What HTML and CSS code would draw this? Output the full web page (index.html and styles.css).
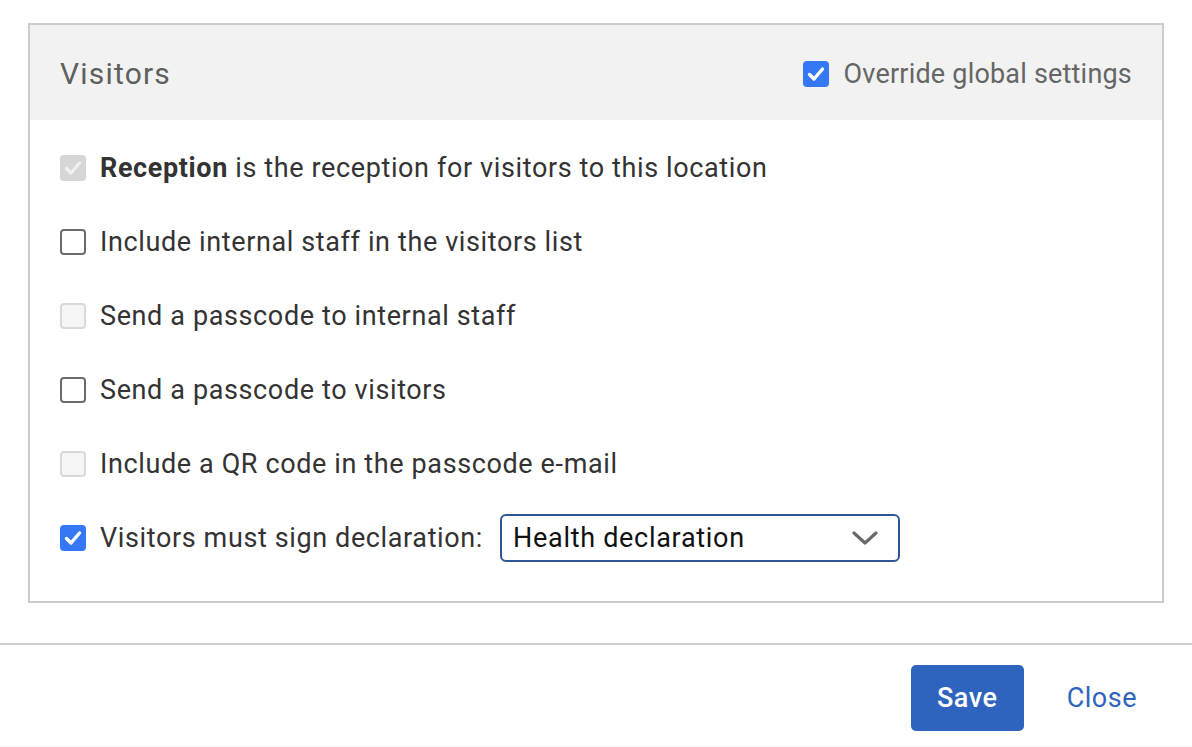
FILE: index.html
```html
<!DOCTYPE html>
<html>
<head>
<meta charset="utf-8">
<link rel="stylesheet" href="styles.css">
</head>
<body>
<div class="page">
  <section class="panel">
    <header class="panel-head">
      <h2 class="title">Visitors</h2>
      <label class="override">
        <span class="cb cb-checked"><svg viewBox="0 0 26 26"><path d="M6.5 13.5l4.5 4.5 8.5-10" /></svg></span>
        <span>Override global settings</span>
      </label>
    </header>
    <div class="panel-body">
      <div class="row">
        <span class="cb cb-disabled-checked"><svg viewBox="0 0 26 26"><path d="M6.5 13.5l4.5 4.5 8.5-10" /></svg></span>
        <span class="label"><b>Reception</b> is the reception for visitors to this location</span>
      </div>
      <div class="row">
        <span class="cb"></span>
        <span class="label">Include internal staff in the visitors list</span>
      </div>
      <div class="row">
        <span class="cb cb-disabled"></span>
        <span class="label">Send a passcode to internal staff</span>
      </div>
      <div class="row">
        <span class="cb"></span>
        <span class="label">Send a passcode to visitors</span>
      </div>
      <div class="row">
        <span class="cb cb-disabled"></span>
        <span class="label">Include a QR code in the passcode e-mail</span>
      </div>
      <div class="row">
        <span class="cb cb-checked"><svg viewBox="0 0 26 26"><path d="M6.5 13.5l4.5 4.5 8.5-10" /></svg></span>
        <span class="label">Visitors must sign declaration:</span>
        <div class="select">
          <span class="select-text">Health declaration</span>
          <svg class="chevron" viewBox="0 0 26 14"><path d="M2 2l11 10 11-10" /></svg>
        </div>
      </div>
    </div>
  </section>
  <footer class="footer">
    <button class="btn btn-primary">Save</button>
    <button class="btn btn-link">Close</button>
  </footer>
</div>
</body>
</html>
```

FILE: styles.css
```css
* { box-sizing: border-box; }
html, body {
  margin: 0;
  padding: 0;
  background: #fff;
  font-family: Roboto, "Liberation Sans", Arial, sans-serif;
}
.page {
  width: 1192px;
  height: 747px;
  padding-top: 23px;
  display: flex;
  flex-direction: column;
  background: linear-gradient(#fff 745px, #fafafa 745px);
}
.panel {
  margin-left: 28px;
  width: 1136px;
  height: 580px;
  border: 2px solid #cccccc;
  display: flex;
  flex-direction: column;
}
.panel-head {
  height: 95px;
  background: #f2f2f2;
  display: flex;
  align-items: center;
  justify-content: space-between;
  padding: 2px 30px 0 30px;
}
.title {
  margin: 0;
  font-weight: 400;
  font-size: 30px;
  color: #5f5f5f;
  letter-spacing: 1.2px;
}
.override {
  display: flex;
  align-items: center;
  gap: 15px;
  font-size: 27px;
  letter-spacing: 0.2px;
  color: #666;
}
.panel-body {
  padding: 11px 30px 0 30px;
  display: flex;
  flex-direction: column;
}
.row {
  height: 74px;
  display: flex;
  align-items: center;
}
.label {
  margin-left: 14px;
  font-size: 27px;
  color: #333;
  letter-spacing: 0.62px;
}
.label b { font-weight: 700; color: #333; }
.cb {
  width: 26px;
  height: 26px;
  flex: none;
  border-radius: 4px;
  border: 2px solid #6b6b6b;
  background: #fff;
  display: flex;
  align-items: center;
  justify-content: center;
}
.cb svg {
  width: 26px;
  height: 26px;
  fill: none;
  stroke: #fff;
  stroke-width: 3.4;
  stroke-linecap: round;
  stroke-linejoin: round;
}
.cb-checked {
  background: #3478f6;
  border: none;
}
.cb-disabled-checked {
  background: #d6d6d6;
  border: none;
}
.cb-disabled-checked svg { stroke: #f0f0f0; }
.cb-disabled {
  background: #f5f5f5;
  border: 2px solid #d9d9d9;
}
.select {
  margin-left: 17px;
  width: 400px;
  height: 48px;
  border: 2px solid #2f5597;
  border-radius: 6px;
  display: flex;
  align-items: center;
  justify-content: space-between;
  padding: 0 20px 0 11px;
}
.select-text {
  font-size: 27px;
  letter-spacing: 0.7px;
  color: #111;
}
.chevron {
  width: 26px;
  height: 14px;
  fill: none;
  stroke: #6a6a6a;
  stroke-width: 3.2;
  stroke-linecap: round;
  stroke-linejoin: round;
}
.footer {
  margin-top: 40px;
  border-top: 2px solid #cfcfcf;
  display: flex;
  justify-content: flex-end;
  align-items: flex-start;
  padding: 20px 39px 0 0;
  gap: 27px;
}
.btn {
  font-family: Roboto, "Liberation Sans", Arial, sans-serif;
  font-size: 27px;
  letter-spacing: 0.5px;
  border: none;
  cursor: pointer;
}
.btn-primary {
  width: 113px;
  height: 66px;
  background: #2e64be;
  color: #fff;
  border-radius: 5px;
  font-weight: 500;
}
.btn-link {
  background: none;
  color: #2e64be;
  height: 66px;
  padding: 0 16px;
}
```
